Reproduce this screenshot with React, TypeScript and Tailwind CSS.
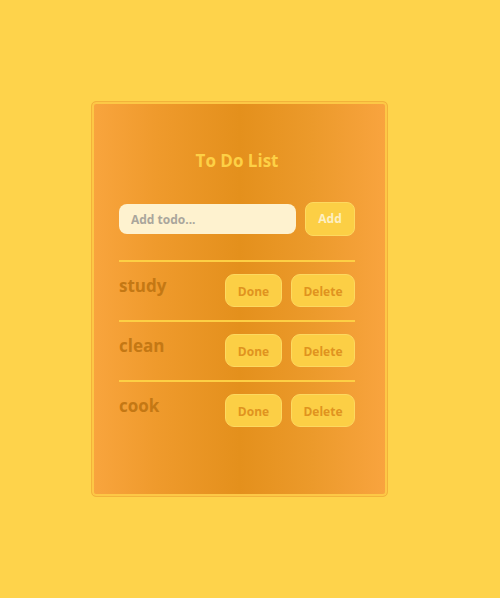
import { useState } from "react";

type Todo = { id: number; text: string; done: boolean };

const initialTodos: Todo[] = [
    { id: 1, text: "study", done: false },
    { id: 2, text: "clean", done: false },
    { id: 3, text: "cook", done: false },
];

function App() {
    const [todos, setTodos] = useState<Todo[]>(initialTodos);
    const [value, setValue] = useState("");

    const addTodo = () => {
        if (!value.trim()) return;
        setTodos([...todos, { id: Date.now(), text: value.trim(), done: false }]);
        setValue("");
    };

    return (
        <div className="min-h-[598px] w-full bg-[#fed34b] pt-[101px] pl-[91px] font-['Open_Sans',sans-serif]">
            <div className="w-[297px] h-[396px] rounded-[5px] border border-[#f3b23a] shadow-[inset_0_0_0_2px_#fdc846] bg-[linear-gradient(90deg,#f9a53e_0%,#ef9a2c_22%,#e4901c_50%,#ec9a2b_75%,#f9a43f_100%)] pl-[27px] pr-[32px] pt-[47px]">
                <h1 className="text-center text-[17px] font-bold text-[#fdd046] leading-[24px] mb-[29px]">To Do List</h1>
                <div className="flex items-center justify-between">
                    <input
                        value={value}
                        onChange={(e) => setValue(e.target.value)}
                        placeholder="Add todo..."
                        className="w-[177px] h-[30px] rounded-[8px] bg-[#fef2cf] px-[12px] text-[12px] font-bold text-[#8a8580] placeholder:text-[#aaa69c] outline-none"
                    />
                    <button
                        onClick={addTodo}
                        className="w-[50px] h-[34px] rounded-[8px] bg-[#fccf45] border border-[#fdd95f] text-[12px] font-bold text-[#fdf0c4]"
                    >
                        Add
                    </button>
                </div>
                <ul className="mt-[24px]">
                    {todos.map((todo) => (
                        <li key={todo.id} className="border-t-2 border-[#fdcf45] flex items-start justify-between pt-[12px] pb-[13px]">
                            <span className={`text-[17px] font-bold text-[#c47814] leading-[24px] ${todo.done ? "line-through" : ""}`}>{todo.text}</span>
                            <div className="flex gap-[9px]">
                                <button
                                    onClick={() => setTodos(todos.map((t) => t.id === todo.id ? { ...t, done: !t.done } : t))}
                                    className="w-[57px] h-[33px] rounded-[9px] bg-[#fccf45] border border-[#fdd95f] text-[12px] font-bold text-[#e0931f] pt-[2px]"
                                >
                                    Done
                                </button>
                                <button
                                    onClick={() => setTodos(todos.filter((t) => t.id !== todo.id))}
                                    className="w-[64px] h-[33px] rounded-[9px] bg-[#fccf45] border border-[#fdd95f] text-[12px] font-bold text-[#e0931f] pt-[2px]"
                                >
                                    Delete
                                </button>
                            </div>
                        </li>
                    ))}
                </ul>
            </div>
        </div>
    );
}

export default App;
